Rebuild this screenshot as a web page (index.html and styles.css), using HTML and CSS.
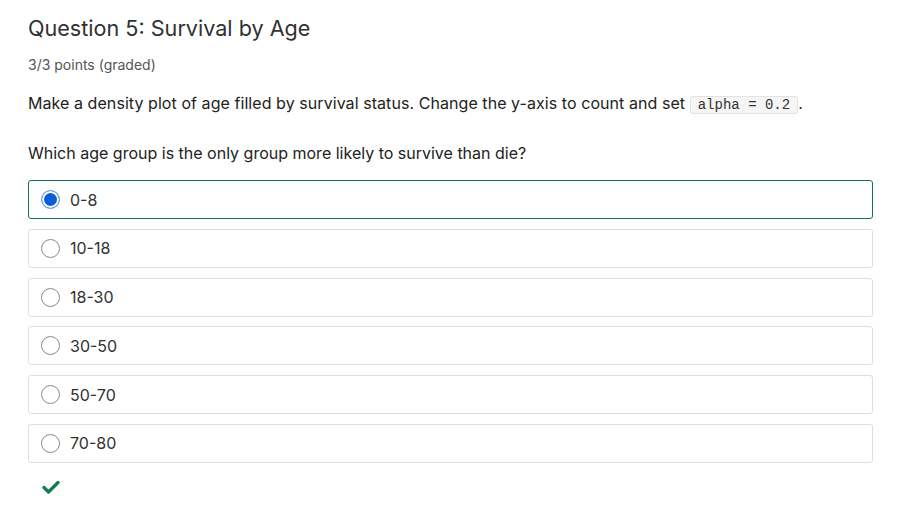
FILE: index.html
```html
<!DOCTYPE html>
<html>
<head>
<meta charset="utf-8">
<link rel="stylesheet" href="styles.css">
</head>
<body>
<div class="problem">
  <h2 class="title">Question 5: Survival by Age</h2>
  <div class="points">3/3 points (graded)</div>
  <p class="text">Make a density plot of age filled by survival status. Change the y-axis to count and set <code>alpha = 0.2</code>.</p>
  <p class="text q">Which age group is the only group more likely to survive than die?</p>
  <div class="choices">
    <label class="choice selected"><span class="radio on"></span><span>0-8</span></label>
    <label class="choice"><span class="radio"></span><span>10-18</span></label>
    <label class="choice"><span class="radio"></span><span>18-30</span></label>
    <label class="choice"><span class="radio"></span><span>30-50</span></label>
    <label class="choice"><span class="radio"></span><span>50-70</span></label>
    <label class="choice"><span class="radio"></span><span>70-80</span></label>
  </div>
  <div class="status">
    <svg width="18" height="14" viewBox="0 0 18 14"><path d="M2 7.5 L6.5 12 L16 2.5" fill="none" stroke="#0d7d4d" stroke-width="3.2" stroke-linecap="round" stroke-linejoin="round"/></svg>
  </div>
</div>
</body>
</html>
```
FILE: styles.css
```css
* { box-sizing: border-box; }
body {
  margin: 0;
  background: #fff;
  font-family: Inter, "Noto Sans", sans-serif;
  color: #313131;
}
.problem {
  padding: 14px 40px 0 28px;
}
.title {
  margin: 0;
  font-size: 21.6px;
  font-weight: 400;
  line-height: 28px;
  color: #313131;
}
.points {
  margin-top: 14px;
  font-size: 14px;
  line-height: 17px;
  color: #555;
}
.text {
  margin: 19px 0 0;
  font-size: 16px;
  line-height: 22px;
  color: #222;
  letter-spacing: 0.004em;
}
.text.q {
  margin-top: 26px;
  letter-spacing: 0;
}
code {
  font-family: "Liberation Mono", monospace;
  font-size: 14px;
  letter-spacing: 0;
  background: #f5f5f5;
  border: 1px solid #e3e3e3;
  border-radius: 3px;
  padding: 0 7px;
  color: #333;
}
.choices {
  margin-top: 16px;
  display: flex;
  flex-direction: column;
  gap: 9.75px;
}
.choice {
  display: flex;
  align-items: center;
  gap: 10px;
  height: 39px;
  padding: 0 12px;
  border: 1px solid #dedede;
  border-radius: 3px;
  font-size: 16px;
  color: #313131;
}
.choice.selected {
  border-color: #126f5a;
}
.radio {
  width: 19px;
  height: 19px;
  border-radius: 50%;
  border: 1px solid #8a8a8a;
  background: #fff;
  flex: none;
}
.radio.on {
  border: 1px solid #6f9fe8;
  background: #0b5ed7;
  box-shadow: inset 0 0 0 2px #fff;
}
.status {
  padding: 17px 0 0 14px;
}
.status svg { display: block; }
```
